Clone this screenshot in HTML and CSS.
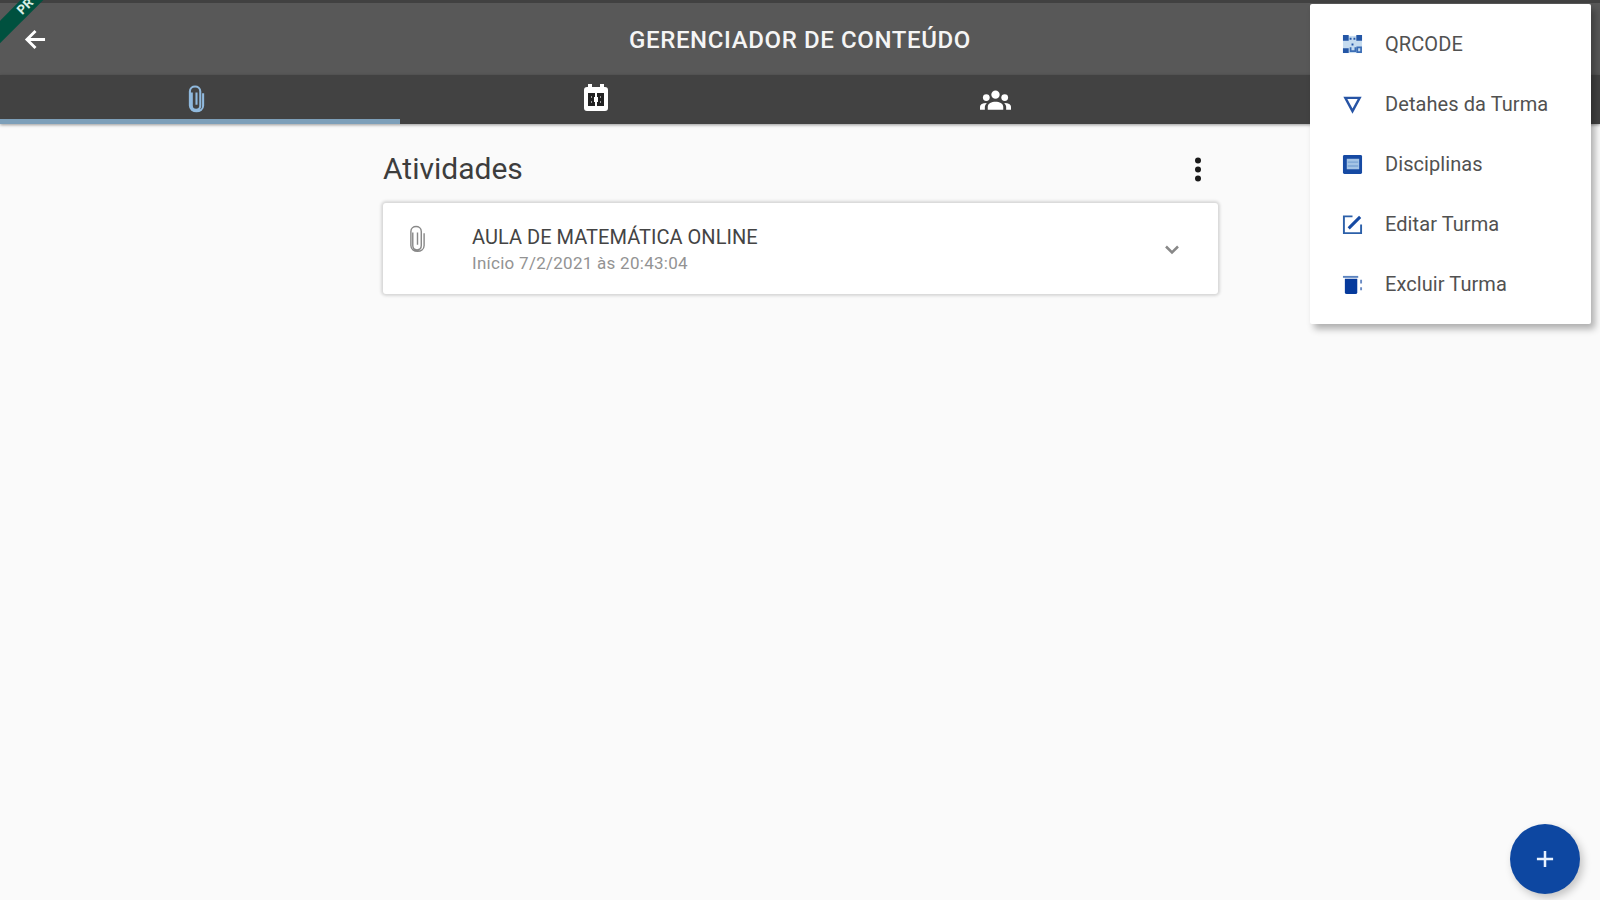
FILE: index.html
```html
<!DOCTYPE html>
<html lang="pt-BR">
<head>
<meta charset="utf-8">
<title>Gerenciador de Conteúdo</title>
<link rel="stylesheet" href="styles.css">
</head>
<body>
<header class="appbar">
  <svg class="back" viewBox="0 0 24 22"><path d="M22 11H3M12 2L3 11l9 9"/></svg>
  <h1 class="title">GERENCIADOR DE CONTEÚDO</h1>
</header>
<nav class="tabs">
  <div class="tab active">
    <svg class="clip" viewBox="0 0 18 30"><path d="M4 8v14c0 6 9 6 9 0V7c0-7-11-7-11 0v15c0 8 14 8 14 0V9M9 8v13"/></svg>
  </div>
  <div class="tab">
    <svg class="calendar" viewBox="0 0 24 27"><path fill="#fff" d="M3 3h1V0h4v3h8V0h4v3h1q3 0 3 3v18q0 3-3 3H3q-3 0-3-3V6q0-3 3-3z"/><path fill="#222" d="M4 9h7v13H4zM13 9h7v13h-7z"/><path fill="#fff" d="M10 13h4v5h-4z"/><path fill="#999" d="M7 12h1v2H7zM7 17h1v2H7zM16 12h1v2h-1zM16 17h1v2h-1z"/></svg>
  </div>
  <div class="tab">
    <svg class="people" viewBox="0 0 32 20"><circle cx="16" cy="4.5" r="4.3"/><circle cx="6.5" cy="7.5" r="3.5"/><circle cx="25.500" cy="7.500" r="3.5"/><path d="M8 20v-3c0-7 16-7 16 0v3zM0 20v-3q0-4 7-4-2 2-2 4v3zM32 20v-3q0-4-7-4 2 2 2 4v3z"/></svg>
  </div>
  <div class="tab"></div>
</nav>
<main class="content">
  <div class="heading">
    <h2 class="section-title">Atividades</h2>
    <svg class="more" viewBox="0 0 6 26"><circle cx="3" cy="3.500" r="3"/><circle cx="3" cy="12.500" r="3"/><circle cx="3" cy="21.500" r="3"/></svg>
  </div>
  <article class="card">
    <svg class="clip card-clip" viewBox="0 0 18 30"><path d="M4 8v14c0 6 9 6 9 0V7c0-7-11-7-11 0v15c0 8 14 8 14 0V9M9 8v13"/></svg>
    <div class="card-text">
      <div class="card-title">AULA DE MATEMÁTICA ONLINE</div>
      <div class="card-date">Início 7/2/2021 às 20:43:04</div>
    </div>
    <svg class="chevron" viewBox="0 0 16 10"><path d="M2 1.500l6 6 6-6"/></svg>
  </article>
</main>
<div class="ribbon">PR</div>
<div class="menu">
  <div class="item">
    <svg class="icon" viewBox="0 0 22 22"><path fill="#c5dbef" d="M1 2h20v18H1z"/><path fill="#2456a6" d="M1 1h6v6H1zM15 1h6v6h-6zM1 15h6v5H1zM10 10h2v2h-2zM8 4h2v2H8zM12 4h2v2h-2z"/><path fill="none" stroke="#3b6db5" stroke-width="1.8" d="M9 14v4h5v-4M16 14h4v5h-4z"/></svg>
    <span class="label">QRCODE</span>
  </div>
  <div class="item">
    <svg class="icon" viewBox="0 0 22 22"><path fill="none" stroke="#2754a5" stroke-width="2.500" d="M3.500 4h15L11 18z"/></svg>
    <span class="label">Detahes da Turma</span>
  </div>
  <div class="item">
    <svg class="icon" viewBox="0 0 22 22"><rect x="1" y="1" width="20" height="20" rx="1.500" fill="#164aa3"/><path fill="#a5c4e5" d="M5 5h13v11H5z"/><path stroke="#7ba4d3" stroke-width="1.500" d="M6 8.500h11M6 12.500h11"/></svg>
    <span class="label">Disciplinas</span>
  </div>
  <div class="item">
    <svg class="icon" viewBox="0 0 22 22"><path fill="none" stroke="#2c60a9" stroke-width="2" d="M11 2.500H2v17.500h18V11"/><path stroke="#164aa3" stroke-width="3.200" d="M7 15L19 3"/></svg>
    <span class="label">Editar Turma</span>
  </div>
  <div class="item">
    <svg class="icon" viewBox="0 0 22 22"><path fill="#063a9c" d="M3 5h13v14q0 2-2 2H5q-2 0-2-2z"/><path fill="#5b83bf" d="M1 2h16v2H1z"/><path fill="#6a8bc4" d="M19 6h2v4h-2zM19 14h2v3h-2z"/></svg>
    <span class="label">Excluir Turma</span>
  </div>
</div>
<button class="fab" aria-label="Adicionar"><svg class="plus" viewBox="0 0 20 20"><path d="M10 1v18M1 10h18"/></svg></button>
</body>
</html>
```
FILE: styles.css
```css
* { box-sizing: border-box; }
body { margin: 0; width: 1600px; height: 900px; position: relative; overflow: hidden; background: #fafafa; font-family: Roboto, sans-serif; }
svg { display: block; flex: none; }
.appbar { height: 75px; background: #585858; border-top: 3px solid #414141; display: flex; align-items: center; padding-left: 24px; }
.back { width: 23px; height: 21px; fill: none; stroke: #fff; stroke-width: 3; }
.title { flex: 1; margin: 1px 47px 0 0; text-align: center; font-size: 24px; line-height: 30px; font-weight: 500; color: #f5f5f5; letter-spacing: 0.62px; text-indent: -24px; padding-left: 24px; }
.tabs { height: 49px; display: flex; background: #424242; box-shadow: 0 1px 3px rgba(0,0,0,.4); }
.tab { width: 400px; display: flex; justify-content: center; align-items: center; padding-bottom: 1px; }
.active { border-bottom: 5px solid #7d9fb9; padding: 4px 8px 0 0; }
.clip { width: 17px; height: 30px; fill: none; stroke: #90b9dd; stroke-width: 2.2; }
.calendar { width: 24px; height: 27px; margin: -3px 9px 0 0; }
.people { width: 31px; height: 20px; fill: #fff; margin: 2px 10px 0 0; }
.content { width: 835px; margin-left: 383px; padding-top: 25px; }
.heading { height: 54px; display: flex; justify-content: space-between; }
.section-title { margin: 2px 0 0; font-size: 30px; line-height: 36px; font-weight: 400; color: #3d3d3d; }
.more { width: 6px; height: 26px; margin: 8px 17px 0 0; fill: #1b1b1b; }
.card { height: 91px; background: #fff; border-radius: 3px; box-shadow: 0 0 3px 2px rgba(0,0,0,.14); display: flex; }
.card-clip { margin: 21px 0 0 26px; stroke: #888; stroke-width: 1.500; }
.card-text { margin: 21px 0 0 46px; flex: 1; }
.card-title { font-size: 20px; line-height: 27px; color: #444; white-space: nowrap; letter-spacing: 0.04px; }
.card-date { font-size: 17px; line-height: 25px; color: #939393; white-space: nowrap; letter-spacing: 0.27px; }
.chevron { width: 16px; height: 10px; margin: 42px 38px 0 0; fill: none; stroke: #888; stroke-width: 2.500; }
.ribbon { position: absolute; left: -44px; top: 8px; width: 120px; height: 16px; transform: rotate(-45deg); background: #00513f; color: #d9eee5; font-size: 13px; line-height: 16px; font-weight: 700; padding-left: 65px; }
.menu { position: absolute; left: 1310px; top: 4px; width: 281px; height: 320px; padding: 10px 0 0 32px; background: #fff; border-radius: 2px; box-shadow: 4px 5px 7px rgba(0,0,0,.3); }
.item { height: 60px; display: flex; align-items: center; }
.icon { width: 21px; height: 21px; margin-right: 22px; }
.label { font-size: 20px; line-height: 26px; color: #515151; white-space: nowrap; letter-spacing: 0.08px; }
.fab { position: absolute; left: 1510px; top: 824px; width: 70px; height: 70px; border: 0; border-radius: 50%; padding: 0; display: flex; align-items: center; justify-content: center; background: #0d47a1; box-shadow: 3px 4px 8px rgba(0,0,0,.22); }
.plus { width: 18px; height: 18px; stroke: #e8f2ff; stroke-width: 2.800; }
```
